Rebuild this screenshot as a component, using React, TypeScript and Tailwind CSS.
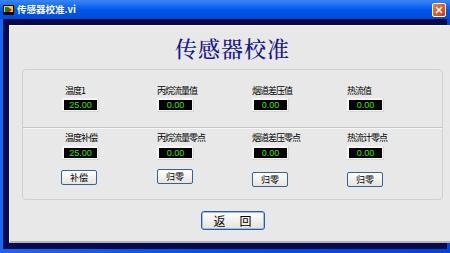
import React from 'react';

const cols = [
  { top: '温度1', topVal: '25.00', bottom: '温度补偿', bottomVal: '25.00', btn: '补偿', labelPad: 'pl-[3px]', btnMt: 'mt-[10px]', btnPad: '-ml-[1px]' },
  { top: '丙烷流量值', topVal: '0.00', bottom: '丙烷流量零点', bottomVal: '0.00', btn: '归零', labelPad: 'pl-0', btnMt: 'mt-[9px]', btnPad: 'ml-0' },
  { top: '烟道差压值', topVal: '0.00', bottom: '烟道差压零点', bottomVal: '0.00', btn: '归零', labelPad: 'pl-0', btnMt: 'mt-[12px]', btnPad: 'ml-0' },
  { top: '热流值', topVal: '0.00', bottom: '热流计零点', bottomVal: '0.00', btn: '归零', labelPad: 'pl-0', btnMt: 'mt-[12px]', btnPad: 'ml-0' },
];

function Display({ value }: { value: string }) {
  return (
    <div className="w-[37px] h-[14px] bg-[#f6f6f6] p-[2px] shadow-[inset_-1px_-1px_0_#d8d8d8]">
      <div className="w-full h-full bg-black flex items-center justify-center text-[9px] leading-none text-[#44e000] font-['Liberation_Sans',sans-serif]">
        {value}
      </div>
    </div>
  );
}

function SmallButton({ text }: { text: string }) {
  return (
    <div className="w-[36px] h-[15px] rounded-[2px] border border-[#3b5f8f] bg-gradient-to-b from-white to-[#e6e4dc] flex items-center justify-center text-[9px] leading-none text-black">
      {text}
    </div>
  );
}

function LabviewIcon() {
  return (
    <svg width="11" height="10" viewBox="0 0 11 10">
      <rect x="0" y="0" width="11" height="10" fill="#000" />
      <rect x="1" y="1" width="9" height="8" fill="#f0d020" />
      <rect x="2" y="2" width="3" height="6" fill="#108010" />
      <path d="M5 2 L9 5 L5 8 Z" fill="#c02020" />
      <rect x="1" y="7" width="9" height="2" fill="#000" />
    </svg>
  );
}

export default function App() {
  return (
    <div className="w-[450px] h-[253px] flex flex-col bg-gradient-to-r from-[#1b66ee] via-[#0050e0] to-[#0046d6] font-['Noto_Sans_CJK_SC',sans-serif] overflow-hidden">
      {/* 标题栏 */}
      <div className="h-[19px] flex items-center pl-[3px] pr-[4px] bg-gradient-to-b from-[#3a86f5] via-[#0058ec] to-[#004ad8]">
        <LabviewIcon />
        <span className="ml-[3px] text-[9.5px] font-bold text-white leading-none">传感器校准.vi</span>
        <div className="ml-auto w-[14px] h-[14px] rounded-[2px] border border-white bg-gradient-to-br from-[#f07a50] to-[#c8400c] flex items-center justify-center">
          <svg width="8" height="8" viewBox="0 0 8 8">
            <path d="M1 1 L7 7 M7 1 L1 7" stroke="white" strokeWidth="1.6" />
          </svg>
        </div>
      </div>

      {/* 深色框 */}
      <div className="flex-1 mx-[3px] mb-[4px] bg-[#09094a] pt-[6px] pl-[6px] pr-[5px] pb-[6px] flex">
        <div className="flex-1 flex flex-col bg-[#e8e8e8] border-l border-t border-[#f8f8f8] border-r-2 border-b-2 border-r-[#b4b4b4] border-b-[#b4b4b4]">
          <div className="mt-[9px] h-[26px] flex items-center justify-center text-[22px] font-medium leading-none text-[#17178a] tracking-[1px] font-['Noto_Serif_CJK_SC','Noto_Sans_CJK_SC',serif]">
            传感器校准
          </div>

          {/* 分组框 */}
          <div className="mt-[8px] mx-[12px] h-[131px] border border-[#d2d2c4] rounded-[4px] flex flex-col">
            <div className="h-[57px] flex pl-[39px] pt-[15px]">
              {cols.map((c, i) => (
                <div key={i} className="w-[95px] flex flex-col">
                  <div className={`h-[12px] text-[9px] tracking-[-1px] leading-[12px] text-black whitespace-nowrap ${c.labelPad}`}>{c.top}</div>
                  <div className="mt-[1px]">
                    <Display value={c.topVal} />
                  </div>
                </div>
              ))}
            </div>
            <div className="h-[2px] border-t border-[#c6c6c6] bg-[#f6f6f6]" />
            <div className="flex-1 flex pl-[39px] pt-[3px]">
              {cols.map((c, i) => (
                <div key={i} className="w-[95px] flex flex-col">
                  <div className={`h-[12px] text-[9px] tracking-[-1px] leading-[12px] text-black whitespace-nowrap ${c.labelPad}`}>{c.bottom}</div>
                  <div className="mt-[2px]">
                    <Display value={c.bottomVal} />
                  </div>
                  <div className={`${c.btnMt} ${c.btnPad}`}>
                    <SmallButton text={c.btn} />
                  </div>
                </div>
              ))}
            </div>
          </div>

          {/* 返回按钮 */}
          <div className="mt-[11px] flex justify-center">
            <div className="w-[64px] h-[19px] rounded-[3px] border border-[#2f5a9e] bg-gradient-to-b from-white to-[#e4e2da] shadow-[inset_0_0_0_1px_#9cbcf0] flex items-center justify-center gap-[14px] text-[12px] leading-none text-black">
              <span>返</span>
              <span>回</span>
            </div>
          </div>
        </div>
      </div>
    </div>
  );
}
